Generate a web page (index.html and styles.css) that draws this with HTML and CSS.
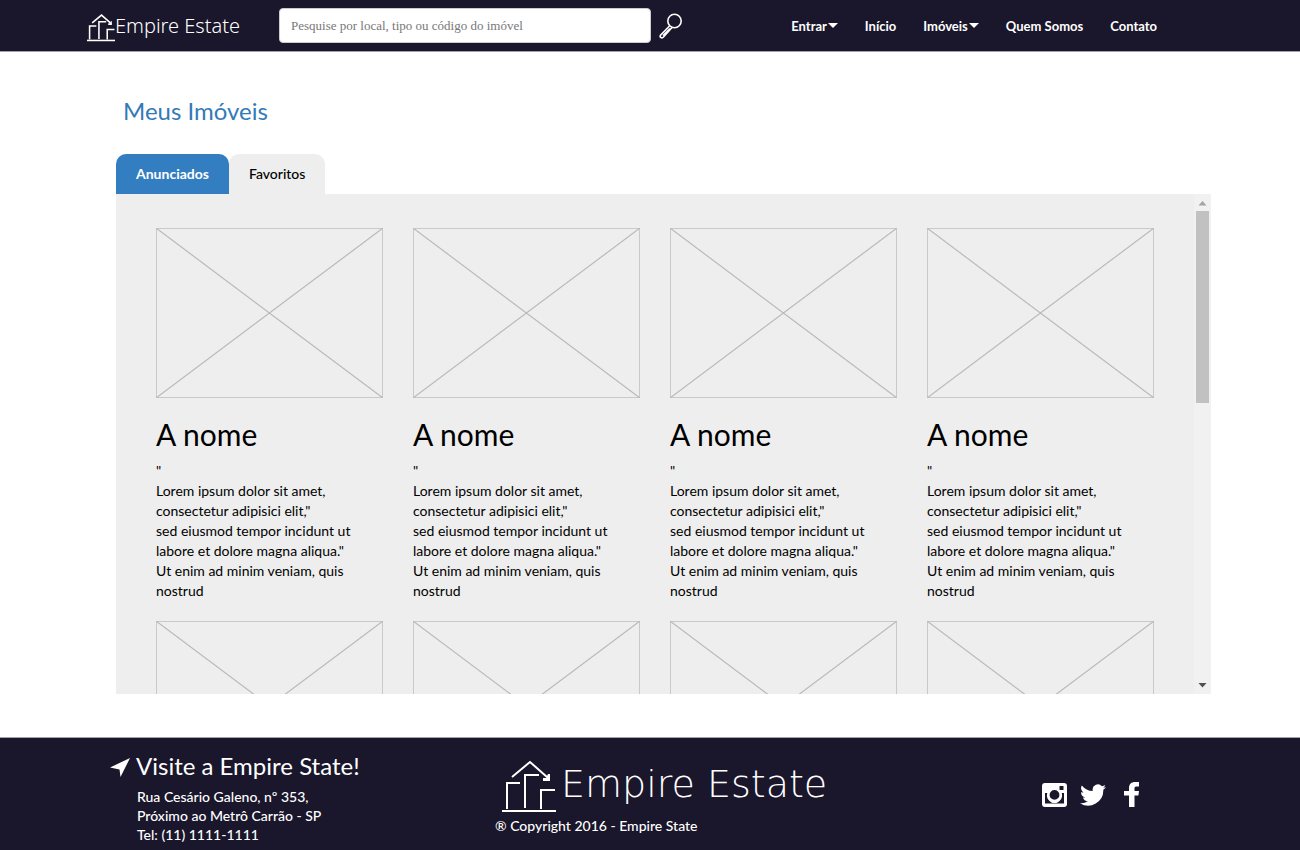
FILE: index.html
```html
<!DOCTYPE html>
<html lang="pt-BR">
<head>
<meta charset="utf-8">
<title>Empire Estate</title>
<meta name="viewport" content="width=device-width, initial-scale=1">
<link rel="stylesheet" href="styles.css">
</head>
<body>
<svg class="defs" aria-hidden="true">
  <symbol id="logo" viewBox="0 0 54 52">
    <g fill="none" stroke="currentColor">
      <path d="M10 17 28 2l17 15M5 49V23h13M23 48V15h14M39 49V30h14"/>
      <path d="M0 51h54"/>
    </g>
    <path d="M48 14v7h-7v-3h3l2-4z" fill="currentColor"/>
  </symbol>
  <symbol id="placeholder" viewBox="0 0 227 170">
    <g fill="none" stroke="#c9c9c9">
      <rect x=".5" y=".5" width="226" height="169"/>
      <path d="M0 0 227 170M227 0 0 170" stroke="#bababa" stroke-width="1.2"/>
    </g>
  </symbol>
</svg>

<header class="topbar">
  <a class="brand" href="#"><svg class="brand-mark" aria-hidden="true"><use href="#logo"/></svg><span>Empire Estate</span></a>
  <form class="search">
    <input class="search-input" type="text" aria-label="Pesquisar" placeholder="Pesquise por local, tipo ou código do imóvel">
    <button class="search-button" type="button" aria-label="Buscar">
      <svg width="24" height="26" viewBox="0 0 24 26" fill="none" stroke="currentColor" stroke-width="1.6"><circle cx="15.5" cy="8" r="6.7"/><path d="M10.500 13 1.500 22.200q-1 2 1 2.600 1 .3 2-.8l8.500-9.500M11 15.500l-7 7"/></svg>
    </button>
  </form>
  <nav class="menu">
    <a href="#">Entrar<i class="caret"></i></a>
    <a href="#">Início</a>
    <a href="#">Imóveis<i class="caret"></i></a>
    <a href="#">Quem Somos</a>
    <a href="#">Contato</a>
  </nav>
</header>

<main class="content">
  <h1 class="title">Meus Imóveis</h1>
  <div class="tabs" role="tablist">
    <button class="tab tab-active" role="tab" aria-selected="true" type="button">Anunciados</button>
    <button class="tab" role="tab" aria-selected="false" type="button">Favoritos</button>
  </div>
  <section class="panel">
    <div class="grid">
      <article><svg class="photo" viewBox="0 0 227 170"><use href="#placeholder"/></svg><h2>A nome</h2><p>"<br>Lorem ipsum dolor sit amet, consectetur adipisici elit,"<br>sed eiusmod tempor incidunt ut labore et dolore magna aliqua."<br>Ut enim ad minim veniam, quis nostrud</p></article>
      <article><svg class="photo" viewBox="0 0 227 170"><use href="#placeholder"/></svg><h2>A nome</h2><p>"<br>Lorem ipsum dolor sit amet, consectetur adipisici elit,"<br>sed eiusmod tempor incidunt ut labore et dolore magna aliqua."<br>Ut enim ad minim veniam, quis nostrud</p></article>
      <article><svg class="photo" viewBox="0 0 227 170"><use href="#placeholder"/></svg><h2>A nome</h2><p>"<br>Lorem ipsum dolor sit amet, consectetur adipisici elit,"<br>sed eiusmod tempor incidunt ut labore et dolore magna aliqua."<br>Ut enim ad minim veniam, quis nostrud</p></article>
      <article><svg class="photo" viewBox="0 0 227 170"><use href="#placeholder"/></svg><h2>A nome</h2><p>"<br>Lorem ipsum dolor sit amet, consectetur adipisici elit,"<br>sed eiusmod tempor incidunt ut labore et dolore magna aliqua."<br>Ut enim ad minim veniam, quis nostrud</p></article>
      <article><svg class="photo" viewBox="0 0 227 170"><use href="#placeholder"/></svg></article>
      <article><svg class="photo" viewBox="0 0 227 170"><use href="#placeholder"/></svg></article>
      <article><svg class="photo" viewBox="0 0 227 170"><use href="#placeholder"/></svg></article>
      <article><svg class="photo" viewBox="0 0 227 170"><use href="#placeholder"/></svg></article>
    </div>
    <div class="scrollbar" aria-hidden="true">
      <svg width="17" height="17" viewBox="0 0 17 17"><path d="M4.500 11.500 8.500 7l4 4.500z" fill="#a3a3a3"/></svg>
      <div class="track"><div class="thumb"></div></div>
      <svg width="17" height="17" viewBox="0 0 17 17"><path d="M4.500 6h8l-4 4.500z" fill="#505050"/></svg>
    </div>
  </section>
</main>

<footer class="footer">
  <div class="visit">
    <svg class="visit-icon" width="20" height="19" viewBox="0 0 20 19" fill="currentColor" aria-hidden="true"><path d="M20 0 10.500 19l-1-7.500L0 9.500z"/></svg>
    <div>
      <h3>Visite a Empire State!</h3>
      <address>Rua Cesário Galeno, nº 353,<br>Próximo ao Metrô Carrão - SP<br>Tel: (11) 1111-1111</address>
    </div>
  </div>
  <div class="about">
    <div class="brand-large"><svg class="brand-large-mark" aria-hidden="true"><use href="#logo"/></svg><span>Empire Estate</span></div>
    <p>® Copyright 2016 - Empire State</p>
  </div>
  <div class="social">
    <a href="#" aria-label="Instagram"><svg width="25" height="24" viewBox="0 0 25 24" fill="currentColor"><path fill-rule="evenodd" d="M3 0h19a3 3 0 0 1 3 3v18a3 3 0 0 1-3 3H3a3 3 0 0 1-3-3V3a3 3 0 0 1 3-3zM17.500 3v4h4V3zM3 10v10.500h19V10h-2.300a7.600 7.600 0 1 1-14.400 0zM12.500 7a4.900 4.900 0 1 0 0 9.800 4.900 4.900 0 0 0 0-9.800z"/></svg></a>
    <a href="#" aria-label="Twitter"><svg width="26" height="22" viewBox="0 2 24 20" fill="currentColor"><path d="M24 4.600a10 10 0 0 1-2.800.8 5 5 0 0 0 2.100-2.700 10 10 0 0 1-3.100 1.200 4.900 4.900 0 0 0-8.400 4.500A14 14 0 0 1 1.700 3.200a4.900 4.900 0 0 0 1.500 6.600 5 5 0 0 1-2.200-.6 4.900 4.900 0 0 0 3.900 4.900 5 5 0 0 1-2.200.1 4.900 4.900 0 0 0 4.600 3.400A9.900 9.900 0 0 1 0 19.500 14 14 0 0 0 21.500 7.100 10 10 0 0 0 24 4.600z"/></svg></a>
    <a href="#" aria-label="Facebook"><svg width="15" height="25" viewBox="0 0 15 25" fill="currentColor"><path d="M15 0v4.500h-2.500c-1.600 0-2 .8-2 2V9H15l-.6 4.500h-3.900V25H5V13.500H0V9h5V6c0-4 2.500-6 6-6z"/></svg></a>
  </div>
</footer>
</body>
</html>
```

FILE: styles.css
```css
* { box-sizing: border-box; }

body {
  margin: 0;
  min-height: 100vh;
  display: flex;
  flex-direction: column;
  background: #fff;
  color: #000;
  font: 14px/20px Lato, sans-serif;
}

h1, h2, h3, p { margin: 0; font-weight: 400; }
a { color: inherit; text-decoration: none; }
svg { display: block; flex: none; }
button { font: inherit; border: 0; cursor: pointer; }
.defs { position: absolute; width: 0; height: 0; }

.topbar {
  display: flex;
  align-items: center;
  padding: 0 143px 0 87px;
  height: 52px;
  background: #1a162b;
  color: #fff;
  border-bottom: 1px solid #a3a2aa;
}

.brand {
  display: flex;
  align-items: center;
  width: 192px;
  font: 300 20px/32px "Noto Sans", sans-serif;
  white-space: nowrap;
}
.brand-mark { width: 28px; height: 29px; margin-top: 4px; stroke-width: 3; }

.search { display: flex; align-items: center; gap: 8px; flex: 1; }
.search-input {
  width: 372px;
  height: 35px;
  padding: 0 11px;
  border: 1px solid #ccc;
  border-radius: 4px;
  background: #fff;
  font: 13px/20px "Liberation Serif", serif;
}
.search-input::placeholder { color: #777; opacity: 1; }
.search-button { padding: 0; background: none; color: #fff; }

.menu { display: flex; gap: 27px; font-size: 13px; font-weight: 700; white-space: nowrap; }
.menu a { display: flex; align-items: center; gap: 1px; }
.caret { border: 5px solid transparent; border-top-color: #fff; border-bottom: 0; }

.content { flex: 1; padding: 43px 89px 43px 116px; }
.title { padding-left: 7px; font-size: 24px; line-height: 32px; color: #337ab7; }

.tabs { display: flex; margin-top: 27px; }
.tab {
  height: 40px;
  padding: 0 20px;
  border-radius: 10px 10px 0 0;
  background: #eee;
  color: #000;
  font-weight: 500;
}
.tab-active { background: #337dc1; color: #fff; font-weight: 700; }

.panel { display: flex; height: 500px; background: #eee; }
.grid {
  flex: 1;
  display: grid;
  grid-template-columns: repeat(4, 1fr);
  align-content: start;
  gap: 20px 30px;
  padding: 34px 40px;
  overflow-y: auto;
  scrollbar-width: none;
}
.photo { width: 100%; height: auto; }
.grid h2 { margin: 20px 0 10px; font-size: 30px; line-height: 33px; }

.scrollbar { display: flex; flex-direction: column; width: 17px; background: #f1f1f1; }
.track { flex: 1; padding: 0 2px; }
.thumb { height: 192px; background: #c1c1c1; }

.footer {
  display: grid;
  grid-template-columns: 385px 1fr auto;
  min-height: 113px;
  padding: 13px 161px 4px 110px;
  background: #1a162b;
  color: #fff;
  border-top: 1px solid #a3a2aa;
  font-weight: 500;
}
.visit { display: flex; gap: 6px; }
.visit-icon { margin-top: 7px; }
.visit h3 { font-size: 24px; line-height: 29px; }
.visit address { padding: 7px 0 0 1px; font-style: normal; line-height: 19px; }
.about { padding-top: 9px; }
.about p { font-weight: 500; }
.brand-large {
  display: flex;
  align-items: flex-start;
  gap: 5px;
  height: 56px;
  padding-left: 7px;
  font: 200 38px/48px "DejaVu Sans Light", "DejaVu Sans", sans-serif;
  white-space: nowrap;
}
.brand-large-mark { width: 54px; height: 52px; stroke-width: 2; }
.social { display: flex; align-items: center; gap: 13px; padding-bottom: 8px; }
.social a:last-child { margin-left: 5px; }
```
